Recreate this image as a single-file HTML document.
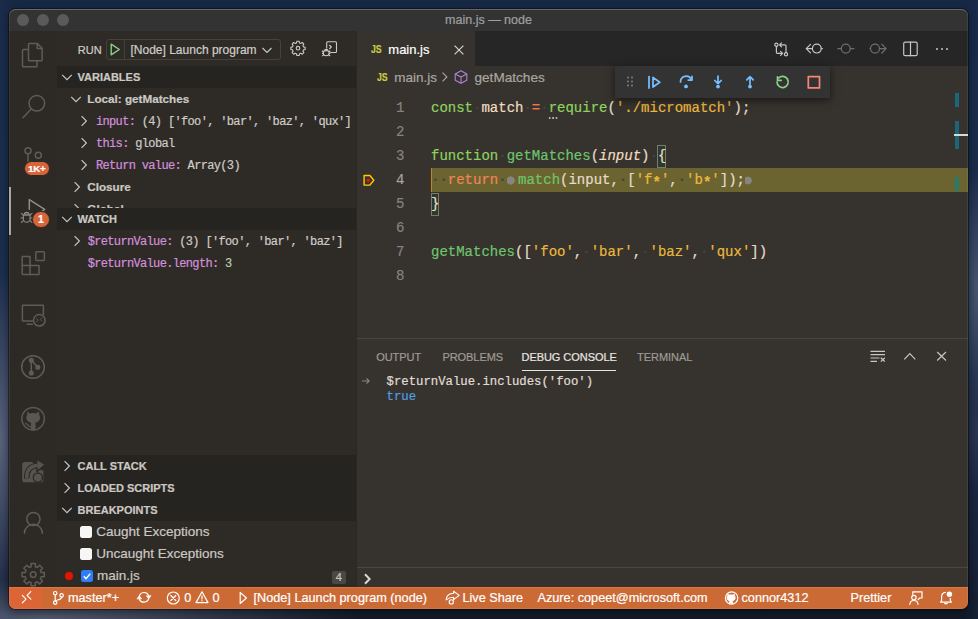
<!DOCTYPE html>
<html><head><meta charset="utf-8">
<style>
*{box-sizing:border-box;margin:0;padding:0}
html,body{width:978px;height:619px;overflow:hidden}
body{position:relative;font-family:"Liberation Sans",sans-serif;
 background:
 radial-gradient(ellipse 36px 170px at 0px 440px,rgba(92,101,126,.95),rgba(92,101,126,0) 100%),
 radial-gradient(ellipse 320px 40px at 40px 619px,rgba(88,96,120,.9),rgba(88,96,120,0) 100%),
 radial-gradient(ellipse 26px 120px at 978px 290px,rgba(80,92,118,.85),rgba(80,92,118,0) 100%),
 radial-gradient(ellipse 20px 60px at 978px 430px,rgba(50,62,90,.6),rgba(50,62,90,0) 100%),
 linear-gradient(90deg,rgba(30,48,80,.55) 0,rgba(30,48,80,0) 12px,rgba(30,48,80,0) 966px,rgba(30,48,80,.3) 978px),linear-gradient(180deg,#172845 0%,#1a2c4a 45%,#1b2741 70%,#121a2a 100%);}
.a{position:absolute}
#win{-webkit-text-stroke:.2px currentColor}
.mono{font-family:"Liberation Mono",monospace}
#win{left:9px;top:9px;width:959px;height:600px;border-radius:6.5px;overflow:hidden;background:#2e2b27;box-shadow:0 0 0 1px rgba(5,8,14,.5),0 3px 8px rgba(0,0,0,.4)}
#title{left:0;top:0;width:959px;height:22px;background:#333333}
.tl{width:12px;height:12px;border-radius:50%;background:#5a5a5a;top:4.5px}
#activity{left:0;top:22px;width:48px;height:556px;background:#2d2a26}
#side{left:48px;top:22px;width:299px;height:556px;background:#2e2b27}
#editor{left:347px;top:22px;width:612px;height:307px;background:#36322d}
#panel{left:347px;top:329px;width:612px;height:249px;background:#36322d;border-top:1px solid #4a463f}
#status{left:0;top:578px;width:959px;height:22px;background:#cc6a36;color:#fff;font-size:12.7px}
.hdr{left:0;width:299px;height:22px;background:#262420;color:#cbc8c3;font-weight:700;font-size:11px}
.grp{height:22px;line-height:22px;font-weight:700;font-size:11.7px;color:#cbc8c3;white-space:nowrap}
.vr{height:22px;line-height:24px;font-size:12px;letter-spacing:-.66px;color:#cfccc7;white-space:nowrap}
.vn{color:#d48fdc}
.cb{width:12px;height:12px;border-radius:2.5px;background:#f6f6f6}
.bp{height:22px;line-height:22.5px;font-size:13.5px;color:#cbc8c3;white-space:nowrap}
.ln{left:0;width:48.5px;text-align:right;height:24px;line-height:24px;font-size:14px;color:#858380}
.code{left:75px;height:24px;line-height:24px;font-size:14px;white-space:pre;color:#e6dccb}
.code i{font-style:normal}
.bpd{display:inline-block;width:11.4px;height:24px;vertical-align:top;background:radial-gradient(circle at 3.6px 12.5px,#87857e 3.8px,rgba(135,133,126,0) 4.4px)}
.w{color:#46433d;font-weight:700}
.k{color:#8fd35f}.v{color:#f2dcc0}.op{color:#e8784a}.f{color:#6fc46f}.p{color:#e6dccb}.st{color:#ebb83e}.r{color:#ee8559}
.ptab{top:11.5px;font-size:11px;color:#9e9b95;white-space:nowrap;letter-spacing:-.05px}
.con{left:30.5px;font-size:12.3px;line-height:15.5px;color:#e0ddd8;white-space:pre}
.sb{top:3.5px;font-size:12.7px;color:#fff;white-space:nowrap}
</style></head><body>
<div id="win" class="a">
 <div id="title" class="a">
  <div class="a tl" style="left:8px"></div>
  <div class="a tl" style="left:28px"></div>
  <div class="a tl" style="left:48px"></div>
  <div class="a" style="left:0;width:959px;top:3.6px;text-align:center;font-size:12.5px;color:#a0a0a0">main.js — node</div>
 </div>
 <div id="activity" class="a">
  <div class="a" style="left:0;top:156px;width:2px;height:48px;background:#a9a6a0"></div>
  <svg class="a" style="left:0;top:0" width="48" height="556" viewBox="9 31 48 556" fill="none" stroke="#5f5b55" stroke-width="1.5" stroke-linejoin="round" stroke-linecap="round">
   <!-- explorer -->
   <path d="M29.3 43.6h8.2l4.6 4.6v11.8q0 .8-.8.8H29.3q-.8 0-.8-.8V44.4q0-.8.8-.8z"/>
   <path d="M37.2 43.8v4.7h4.7"/>
   <path d="M28.3 49.6h-5q-.8 0-.8.8v15.6q0 .8.8.8h12.9q.8 0 .8-.8v-5.2"/>
   <!-- search -->
   <circle cx="36.8" cy="103.3" r="7.8"/>
   <path d="M31.2 109L23 117.8"/>
   <!-- scm -->
   <circle cx="28" cy="150.8" r="3"/>
   <circle cx="38.3" cy="155.2" r="3"/>
   <path d="M28 153.8v8"/>
   <!-- debug -->
   <g stroke="#8f8c87">
   <path d="M29.3 209.3V199.6l15.4 9.8-2.2 1.4"/>
   <g stroke-width="1.1">
   <path d="M24 214.3a2.8 2.6 0 0 1 5.4 0z"/>
   <path d="M23.3 215.3h6.8v3.2a3.4 3.8 0 0 1-6.8 0z"/>
   <path d="M21.4 213.4l1.9 1.6M21 218h2.3M21.4 222.4l2-1.8M32 213.4l-1.9 1.6M32.4 218h-2.3M32 222.4l-2-1.8"/>
   </g></g>
   <!-- extensions -->
   <path d="M22.2 256.5h7.8v9h9v8.5q0 .5-.5.5H22.7q-.5 0-.5-.5v-17q0-.5.5-.5z"/>
   <path d="M22.2 265.5h7.8v9"/>
   <rect x="35.8" y="251.7" width="8.6" height="8.7" rx="1"/>
   <!-- remote explorer -->
   <path d="M32.5 321H23q-.6 0-.6-.6V305.8q0-.6.6-.6h19.8q.6 0 .6.6v8.6"/>
   <circle cx="39.3" cy="320.3" r="5.8"/>
   <path d="M36.6 318.6l1.6 1.6-1.6 1.6M41.9 317.8l-1.6 1.6 1.6 1.6" stroke-width="1"/>
   <path d="M27.2 324.3h5"/>
   <!-- live share circle -->
   <circle cx="33" cy="367" r="11.3"/>
   <circle cx="31.3" cy="360.3" r="1.8" fill="#5f5b55"/>
   <circle cx="37.8" cy="367.3" r="1.8" fill="#5f5b55"/>
   <circle cx="31.3" cy="373" r="1.8" fill="#5f5b55"/>
   <path d="M31.3 360.3v12.7M31.3 360.3l6.5 7"/>
   <!-- github -->
   <circle cx="33.1" cy="418.8" r="11.3" stroke="#5a5752"/>
   <path d="M27.2 411.6l2.6 1.9a9 9 0 0 1 6.4 0l2.6-1.9c.5 1.2.6 2.4.4 3.4.6.8.9 1.6.9 2.6 0 3-2 4.6-4.6 5v7.6h-4.6v-7.6c-2.6-.4-4.6-2-4.6-5 0-1 .3-1.8.9-2.6-.2-1-.1-2.2.4-3.4z" fill="#5a5752" stroke="none"/>
   <path d="M25.6 423.3c1.6.6 2.4 1.6 3.2 2.6.6.7 1.2 1 2 1" stroke="#5a5752" stroke-width="1.3"/>
   <!-- live share share -->
   <rect x="22.2" y="462" width="21.2" height="20.3" rx="2.6" fill="#555350" stroke="none"/>
   <path d="M31 461h14v9.5h-3z" fill="#2d2a26" stroke="none"/>
   <path d="M26.8 478.5C26.3 470.5 30.5 465.6 38 465.2" stroke="#2d2a26" stroke-width="5.6" stroke-linecap="butt"/>
   <path d="M36.6 458.6l9 6.2-8.6 6.6z" fill="#2d2a26" stroke="#2d2a26" stroke-width="1.6"/>
   <path d="M26.8 478.3C26.3 470.5 30.5 465.6 38 465.2" stroke="#555350" stroke-width="3.4" stroke-linecap="butt"/>
   <path d="M37.4 460.2l6.8 4.6-6.6 5.1z" fill="#555350" stroke="none"/>
   <circle cx="37.9" cy="477.6" r="4.6" fill="#555350" stroke="#2d2a26" stroke-width="1.4"/>
   <!-- accounts -->
   <circle cx="33.4" cy="519" r="6.6"/>
   <path d="M24.4 533.3a9 9 0 0 1 18 0"/>
   <!-- gear -->
   <path d="M30.06 567.02 L31.08 566.68 L31.04 563.51 L35.36 563.51 L35.32 566.68 L36.34 567.02 L37.30 567.50 L39.52 565.23 L42.57 568.28 L40.30 570.50 L40.78 571.46 L41.12 572.48 L44.29 572.44 L44.29 576.76 L41.12 576.72 L40.78 577.74 L40.30 578.70 L42.57 580.92 L39.52 583.97 L37.30 581.70 L36.34 582.18 L35.32 582.52 L35.36 585.69 L31.04 585.69 L31.08 582.52 L30.06 582.18 L29.10 581.70 L26.88 583.97 L23.83 580.92 L26.10 578.70 L25.62 577.74 L25.28 576.72 L22.11 576.76 L22.11 572.44 L25.28 572.48 L25.62 571.46 L26.10 570.50 L23.83 568.28 L26.88 565.23 L29.10 567.50Z"/>
   <circle cx="33.2" cy="574.6" r="2.8"/>
  </svg>
  <div class="a" style="left:15px;top:129.7px;width:25.5px;height:15.7px;border-radius:8px;background:#d8643a;border:1px solid #2d2a26;color:#fff;font-size:9.8px;font-weight:700;text-align:center;line-height:13.7px;letter-spacing:-.2px">1K+</div>
  <div class="a" style="left:23.3px;top:179.6px;width:17.4px;height:17.4px;border-radius:50%;background:#d8643a;border:1.2px solid #2d2a26;color:#fff;font-size:10.5px;font-weight:700;text-align:center;line-height:15px">1</div>
 </div>
 <div id="side" class="a"><div class="a" style="left:20.7px;top:12.6px;font-size:11px;color:#cfccc7;letter-spacing:.1px">RUN</div><div class="a" style="left:49px;top:8px;width:175px;height:21px;border:1px solid #45423c;border-radius:3px;background:transparent"></div>
<svg class="a" style="left:53px;top:12px" width="14" height="14" viewBox="0 0 14 14" fill="none" stroke="#89d185" stroke-width="1.4" stroke-linejoin="round"><path d="M1.2 1.2v10.6l8.1-5.3z"/></svg>
<div class="a" style="left:66.5px;top:9px;width:1px;height:19px;background:#43403a"></div>
<div class="a" style="left:73.5px;top:11.5px;font-size:12px;color:#d0cdc8;white-space:nowrap">[Node] Launch program</div><svg class="a" style="left:201.5px;top:10.5px" width="16" height="16" viewBox="0 0 16 16" fill="none" stroke="#c5c5c5" stroke-width="1.2"><path d="M3.5 6l4.5 4.5 4.5-4.5"/></svg><svg class="a" style="left:228px;top:6px" width="56" height="26" viewBox="285 37 56 26" fill="none" stroke="#cdcac5" stroke-width="1.1" stroke-linejoin="round">
  <path d="M296.9 41.2h2.2l.4 1.7 1.3.5 1.5-.9 1.55 1.55-.9 1.5.5 1.3 1.7.4v2.2l-1.7.4-.5 1.3.9 1.5-1.55 1.55-1.5-.9-1.3.5-.4 1.7h-2.2l-.4-1.7-1.3-.5-1.5.9-1.55-1.55.9-1.5-.5-1.3-1.7-.4v-2.2l1.7-.4.5-1.3-.9-1.5 1.55-1.55 1.5.9 1.3-.5z"/>
  <circle cx="298" cy="48.2" r="1.8"/>
  <path d="M326.7 48.5v-5.8c0-.6.4-1 1-1h7.8c.6 0 1 .4 1 1v8.8c0 .6-.4 1-1 1h-5.2"/>
  <path d="M329.3 45l2 2-2 2"/>
  <path d="M324 50.4a2.2 1.6 0 0 1 4.4 0z" fill="#cdcac5" stroke="none"/>
  <path d="M323.4 52c0-1 1.2-1.4 2.8-1.4s2.8.4 2.8 1.4v1.6c0 1.4-1.2 2.2-2.8 2.2s-2.8-.8-2.8-2.2z"/>
  <path d="M322 50.8l1.4 1M322 53.4h1.4M322.2 56l1.4-1M330.4 50.8l-1.4 1M330.4 53.4H329M330.2 56l-1.4-1"/>
  </svg>
<div class="a hdr" style="top:35px"><svg class="a" style="left:2.4000000000000004px;top:3px" width="16" height="16" viewBox="0 0 16 16" fill="none" stroke="#c5c5c5" stroke-width="1.2"><path d="M3.2 5.8L8 10.6l4.8-4.8"/></svg><span class="a" style="left:20.5px;top:0;line-height:22px">VARIABLES</span></div><svg class="a" style="left:11px;top:60px" width="16" height="16" viewBox="0 0 16 16" fill="none" stroke="#c5c5c5" stroke-width="1.2"><path d="M3.2 5.8L8 10.6l4.8-4.8"/></svg><div class="a grp" style="left:30.3px;top:57px">Local: getMatches</div><svg class="a" style="left:18.9px;top:82px" width="16" height="16" viewBox="0 0 16 16" fill="none" stroke="#c5c5c5" stroke-width="1.2"><path d="M5.6 3.2L10.4 8l-4.8 4.8"/></svg><div class="a mono vr" style="left:39px;top:79px"><span class="vn">input:</span> (4) ['foo', 'bar', 'baz', 'qux']</div><svg class="a" style="left:18.9px;top:104px" width="16" height="16" viewBox="0 0 16 16" fill="none" stroke="#c5c5c5" stroke-width="1.2"><path d="M5.6 3.2L10.4 8l-4.8 4.8"/></svg><div class="a mono vr" style="left:39px;top:101px"><span class="vn">this:</span> global</div><svg class="a" style="left:18.9px;top:126px" width="16" height="16" viewBox="0 0 16 16" fill="none" stroke="#c5c5c5" stroke-width="1.2"><path d="M5.6 3.2L10.4 8l-4.8 4.8"/></svg><div class="a mono vr" style="left:39px;top:123px"><span class="vn">Return value:</span> Array(3)</div><svg class="a" style="left:11.7px;top:148px" width="16" height="16" viewBox="0 0 16 16" fill="none" stroke="#c5c5c5" stroke-width="1.2"><path d="M5.6 3.2L10.4 8l-4.8 4.8"/></svg><div class="a grp" style="left:30.3px;top:145px">Closure</div><svg class="a" style="left:11.7px;top:170px" width="16" height="16" viewBox="0 0 16 16" fill="none" stroke="#c5c5c5" stroke-width="1.2"><path d="M5.6 3.2L10.4 8l-4.8 4.8"/></svg><div class="a grp" style="left:30.3px;top:167px">Global</div><div class="a hdr" style="top:177px"><svg class="a" style="left:2.4000000000000004px;top:3px" width="16" height="16" viewBox="0 0 16 16" fill="none" stroke="#c5c5c5" stroke-width="1.2"><path d="M3.2 5.8L8 10.6l4.8-4.8"/></svg><span class="a" style="left:20.5px;top:0;line-height:22px">WATCH</span></div><svg class="a" style="left:12px;top:202px" width="16" height="16" viewBox="0 0 16 16" fill="none" stroke="#c5c5c5" stroke-width="1.2"><path d="M5.6 3.2L10.4 8l-4.8 4.8"/></svg><div class="a mono vr" style="left:30.7px;top:199px"><span class="vn">$returnValue:</span> (3) ['foo', 'bar', 'baz']</div><div class="a mono vr" style="left:30.7px;top:221px"><span class="vn">$returnValue.length:</span> <span style="color:#b5cea8">3</span></div><div class="a hdr" style="top:424px"><svg class="a" style="left:2.4000000000000004px;top:3px" width="16" height="16" viewBox="0 0 16 16" fill="none" stroke="#c5c5c5" stroke-width="1.2"><path d="M5.6 3.2L10.4 8l-4.8 4.8"/></svg><span class="a" style="left:20.5px;top:0;line-height:22px">CALL STACK</span></div><div class="a hdr" style="top:446px"><svg class="a" style="left:2.4000000000000004px;top:3px" width="16" height="16" viewBox="0 0 16 16" fill="none" stroke="#c5c5c5" stroke-width="1.2"><path d="M5.6 3.2L10.4 8l-4.8 4.8"/></svg><span class="a" style="left:20.5px;top:0;line-height:22px">LOADED SCRIPTS</span></div><div class="a hdr" style="top:468px"><svg class="a" style="left:2.4000000000000004px;top:3px" width="16" height="16" viewBox="0 0 16 16" fill="none" stroke="#c5c5c5" stroke-width="1.2"><path d="M3.2 5.8L8 10.6l4.8-4.8"/></svg><span class="a" style="left:20.5px;top:0;line-height:22px">BREAKPOINTS</span></div><div class="a cb" style="left:23px;top:495px"></div><div class="a bp" style="left:39.3px;top:490px">Caught Exceptions</div>
<div class="a cb" style="left:23px;top:517px"></div><div class="a bp" style="left:39.3px;top:512px">Uncaught Exceptions</div>
<div class="a" style="left:7.5px;top:540.5px;width:8.5px;height:8.5px;border-radius:50%;background:#e51400"></div>
<div class="a cb" style="left:24px;top:539px;background:#2f7ef5"><svg class="a" style="left:0;top:0" width="12" height="12" viewBox="0 0 12 12" fill="none" stroke="#fff" stroke-width="1.4"><path d="M2.8 6.3l2.2 2.3 4.3-5"/></svg></div><div class="a bp" style="left:40px;top:534px">main.js</div>
<div class="a" style="left:274.5px;top:539.5px;width:14.5px;height:13px;border-radius:2px;background:#4a4844;color:#c8c5c0;font-size:11px;text-align:center;line-height:13px">4</div></div>
 <div id="editor" class="a">
  <div class="a" style="left:0;top:0;width:612px;height:35px;background:#262626"></div>
  <div class="a" style="left:0;top:0;width:119px;height:35px;background:#36322d"></div>
  <div class="a" style="left:14.7px;top:11.6px;font-size:10.6px;font-weight:700;color:#cbcb41;letter-spacing:-.2px;transform:scaleX(.82);transform-origin:0 0">JS</div>
  <div class="a" style="left:32.3px;top:10.5px;font-size:13px;color:#ffffff">main.js</div>
  <svg class="a" style="left:95px;top:10.5px" width="16" height="16" viewBox="0 0 16 16" fill="none" stroke="#d0d0d0" stroke-width="1.2"><path d="M3.6 3.6l8.8 8.8M12.4 3.6l-8.8 8.8"/></svg>
  <!-- editor actions -->
  <svg class="a" style="left:416px;top:9px" width="180" height="18" viewBox="416 9 180 18" fill="none" stroke="#c5c5c5" stroke-width="1.2" stroke-linecap="round" stroke-linejoin="round">
   <circle cx="420.4" cy="13.7" r="1.6"/>
   <path d="M420.4 15.3v6q0 1 1 1h5.3M424.6 20.3l2 2-2 2"/>
   <circle cx="430" cy="23.3" r="1.6"/>
   <path d="M430 21.7v-6.9q0-1-1-1h-5.4M425.5 11.8l-2 2 2 2"/>
   <path d="M454.5 13.3l-4.3 4.3 4.3 4.3M450.3 17.6h6"/>
   <circle cx="460.8" cy="17.6" r="4.4"/>
   <path d="M465.2 17.6h1.2"/>
   <g stroke="#6f6f6f"><circle cx="489.8" cy="17.6" r="4.5"/><path d="M481.8 17.6h3.5M494.3 17.6h3.7"/>
   <circle cx="519" cy="17.6" r="4.5"/><path d="M514 17.6h.5M523.5 17.6h6.3M525.8 13.2l4.3 4.4-4.3 4.4"/></g>
   <rect x="547.7" y="11.2" width="13.5" height="13.5" rx="1.5"/>
   <path d="M554.5 11.2v13.5"/>
   <g fill="#c5c5c5" stroke="none"><circle cx="581" cy="18" r="1"/><circle cx="586" cy="18" r="1"/><circle cx="591" cy="18" r="1"/></g>
  </svg>
  <!-- breadcrumbs -->
  <div class="a" style="left:20.6px;top:40.3px;font-size:10.6px;font-weight:700;color:#cbcb41;letter-spacing:-.2px;transform:scaleX(.82);transform-origin:0 0">JS</div>
  <div class="a" style="left:38.3px;top:38.7px;font-size:13.5px;color:#a9a6a0">main.js</div>
  <svg class="a" style="left:80.5px;top:38px" width="16" height="16" viewBox="0 0 16 16" fill="none" stroke="#a9a6a0" stroke-width="1.1"><path d="M5.5 3.6L9.9 8l-4.4 4.4"/></svg>
  <svg class="a" style="left:97px;top:38px" width="16" height="16" viewBox="0 0 16 16" fill="none" stroke="#b180d7" stroke-width="1.1" stroke-linejoin="round"><path d="M8 1.8l5.8 3.1v6.3L8 14.3 2.2 11.2V4.9z"/><path d="M2.2 4.9L8 8l5.8-3.1M8 8v6.3"/></svg>
  <div class="a" style="left:118.5px;top:38.7px;font-size:13.6px;color:#a9a6a0">getMatches</div>
  <!-- gutter -->
  <div class="a mono ln" style="top:65px">1</div>
  <div class="a mono ln" style="top:89px">2</div>
  <div class="a mono ln" style="top:113px">3</div>
  <div class="a mono ln" style="top:137px;color:#a8a59f">4</div>
  <div class="a mono ln" style="top:161px">5</div>
  <div class="a mono ln" style="top:185px">6</div>
  <div class="a mono ln" style="top:209px">7</div>
  <div class="a mono ln" style="top:233px">8</div>
  <!-- highlight -->
  <div class="a" style="left:75px;top:137px;width:537px;height:24px;background:#6b6430;border-left:1.5px solid #c0862c"></div>
  <svg class="a" style="left:6.5px;top:143px" width="13" height="13" viewBox="0 0 13 13"><path d="M1.1 1.5h5.8l3.9 4.8-3.9 4.8H1.1z" fill="none" stroke="#ffcc00" stroke-width="1.4" stroke-linejoin="round"/><circle cx="5.3" cy="6.3" r="1.9" fill="#e51400"/></svg>
  <!-- bracket boxes -->
  <div class="a" style="left:301.3px;top:113.5px;width:8.4px;height:23px;border:1px solid #7a7a72;background:#2c3a2c"></div>
  <div class="a" style="left:75px;top:161.5px;width:8.4px;height:23px;border:1px solid #7a7a72;background:#2c3a2c"></div>
  <div class="a mono code" style="top:65px"><span class="k">const</span><i class="w">·</i><span class="v">match</span><i class="w">·</i><span class="op">=</span><i class="w">·</i><span class="k">require</span><span class="p">(</span><span class="st">'./micromatch'</span><span class="p">);</span></div>
  <div class="a" style="left:192px;top:85.5px;width:10px;height:2px;background:radial-gradient(circle,#b0ada8 45%,transparent 50%) 0 0/3.4px 2px repeat-x"></div>
  <div class="a mono code" style="top:113px"><span class="k">function</span><i class="w">·</i><span class="f">getMatches</span><span class="p">(</span><span class="v" style="font-style:italic">input</span><span class="p">)</span><i class="w">·</i><span class="p">{</span></div>
  <div class="a mono code" style="top:137px"><i class="w">··</i><span class="r">return</span><i class="w">·</i><b class="bpd"></b><span class="f">match</span><span class="p">(input,</span><i class="w">·</i><span class="p">[</span><span class="st">'f<span style="position:relative;top:2.5px;font-weight:700">*</span>'</span><span class="p">,</span><i class="w">·</i><span class="st">'b<span style="position:relative;top:2.5px;font-weight:700">*</span>'</span><span class="p">]);</span><b class="bpd" style="width:9px;background:radial-gradient(circle at 2.9px 12.5px,#87857e 3.6px,rgba(135,133,126,0) 4.2px)"></b></div>
  <div class="a mono code" style="top:161px"><span class="p">}</span></div>
  <div class="a mono code" style="top:209px"><span class="f">getMatches</span><span class="p">([</span><span class="st">'foo'</span><span class="p">,</span><i class="w">·</i><span class="st">'bar'</span><span class="p">,</span><i class="w">·</i><span class="st">'baz'</span><span class="p">,</span><i class="w">·</i><span class="st">'qux'</span><span class="p">])</span></div>
  <!-- overview ruler -->
  <div class="a" style="left:598.5px;top:62px;width:4px;height:14px;background:#1b6678"></div>
  <div class="a" style="left:598.5px;top:90px;width:4px;height:28px;background:#1b6678"></div>
  <div class="a" style="left:598.5px;top:146px;width:4px;height:14px;background:#2a7a6a"></div>
  <div class="a" style="left:598px;top:103px;width:14px;height:2px;background:#d8d8d8"></div>
  <!-- debug toolbar -->
  <div class="a" style="left:259px;top:35px;width:215px;height:32px;background:#333333;box-shadow:0 2px 8px rgba(0,0,0,.55)"></div>
  <svg class="a" style="left:259px;top:35px" width="215" height="32" viewBox="615 66 215 32" fill="none" stroke="#75beff" stroke-width="1.75" stroke-linecap="round" stroke-linejoin="round">
   <g fill="#8a8780" stroke="none"><circle cx="628" cy="77.5" r=".9"/><circle cx="632" cy="77.5" r=".9"/><circle cx="628" cy="81.5" r=".9"/><circle cx="632" cy="81.5" r=".9"/><circle cx="628" cy="85.5" r=".9"/><circle cx="632" cy="85.5" r=".9"/></g>
   <path d="M649 76.5v11.5"/><path d="M653 77.5v9.5l6.8-4.75z"/>
   <path d="M680.5 82a5.8 5.8 0 0 1 11-2.5"/><path d="M692 76.3v3.8h-3.8"/><circle cx="686" cy="86.4" r="1.9" fill="#75beff" stroke="none"/>
   <path d="M718 76v7.5M714.8 80.5l3.2 3.2 3.2-3.2"/><circle cx="718" cy="86.6" r="1.9" fill="#75beff" stroke="none"/>
   <path d="M750 84.2v-7.5M746.8 79.8l3.2-3.2 3.2 3.2"/><circle cx="750" cy="86.6" r="1.9" fill="#75beff" stroke="none"/>
   <path d="M777 82a5.6 5.6 0 1 0 1.6-4" stroke="#89d185"/><path d="M777.5 76.8v3.6h3.6" stroke="#89d185"/>
   <rect x="808.3" y="76.7" width="11.2" height="11.2" stroke="#f48771"/>
  </svg>
 </div>
 <div id="panel" class="a">
  <div class="a ptab" style="left:20.2px">OUTPUT</div>
  <div class="a ptab" style="left:86.4px">PROBLEMS</div>
  <div class="a ptab" style="left:165.5px;color:#e7e5e1">DEBUG CONSOLE</div>
  <div class="a ptab" style="left:281.1px">TERMINAL</div>
  <div class="a" style="left:165.5px;top:30.8px;width:94.8px;height:1px;background:#e7e5e1"></div>
  <svg class="a" style="left:510px;top:7px" width="90" height="20" viewBox="866 346 90 20" fill="none" stroke="#c5c5c5" stroke-width="1.2" stroke-linecap="butt">
   <path d="M870.5 351.3h14.5M870.5 354.7h14.5M870.5 358h9M870.5 361.3h6.5"/>
   <path d="M880.8 357.8l4 3.8M884.8 357.8l-4 3.8" stroke-width="1.3"/>
   <path d="M904.3 359.3l5.5-5.8 5.5 5.8"/>
   <path d="M937.2 352l8.8 8.5M946 352l-8.8 8.5"/>
  </svg>
  <svg class="a" style="left:5px;top:37px" width="10" height="10" viewBox="0 0 10 10" fill="none" stroke="#8a8780" stroke-width="1.1"><path d="M1 5h7.2M5.5 2.3L8.2 5 5.5 7.7"/></svg>
  <div class="a mono con" style="top:35.5px">$returnValue.includes('foo')</div>
  <div class="a mono con" style="top:51.3px;color:#4f9fe0">true</div>
  <div class="a" style="left:0;top:228.3px;width:612px;height:1px;background:#4a4740"></div>
  <svg class="a" style="left:6px;top:232.5px" width="12" height="14" viewBox="0 0 12 14" fill="none" stroke="#d8d8d8" stroke-width="2" stroke-linejoin="miter"><path d="M3 2.3l4.6 4.7L3 11.7"/></svg>
 </div>
 <div class="a" style="left:346.5px;top:22px;width:1.5px;height:556px;background:#2b2824"></div>
 <div id="status" class="a">
  <div class="a" style="left:0;top:0;width:34px;height:22px;background:#dc6535"></div>
  <div class="a" style="left:0;top:0;width:959px;height:1px;background:rgba(255,140,80,.35)"></div>
  <svg class="a" style="left:0;top:0" width="959" height="22" viewBox="9 587 959 22" fill="none" stroke="#fff" stroke-width="1.2" stroke-linecap="round" stroke-linejoin="round">
   <path d="M22.3 595.3l3.7 3.8-3.7 3.8M30.8 591.6l-3.7 3.8 3.7 3.8"/>
   <circle cx="55.2" cy="593.2" r="1.7"/><circle cx="61.6" cy="595.4" r="1.7"/><circle cx="55.2" cy="602.6" r="1.7"/>
   <path d="M55.2 594.9v5.9M61.6 597.1c0 2.5-2 2.6-4 2.9-1.2.2-2.4.7-2.4 1.2"/>
   <path d="M139.3 596.3a4.9 4.9 0 0 1 9.3-.8M148.7 598.4a4.9 4.9 0 0 1-9.3.8"/>
   <path d="M146.6 596.2l2.2 2.4 2-2.6z" fill="#fff" stroke-width=".8"/>
   <path d="M141.4 598.4l-2.2-2.4-2 2.6z" fill="#fff" stroke-width=".8"/>
   <circle cx="173.3" cy="598" r="6"/><path d="M170.8 595.5l5 5M175.8 595.5l-5 5"/>
   <path d="M202 591.8l6 10.8h-12z"/><path d="M202 595.8v3.3M202 600.6v.4"/>
   <path d="M240.2 592.5v11l6.2-5.5z"/>
   <path d="M446.2 599.8C446.4 596 449.4 593.5 453.6 593.3V591.2l5.6 4.2-5.6 4.2v-2.3c-3.2 0-5.6 1-7.4 2.5z" stroke-width="1.1"/>
   <circle cx="451.3" cy="601.9" r="2.1" stroke-width="1.1"/>
   <circle cx="731.6" cy="598" r="6.2"/>
   <path d="M729.5 603.8v-1.8c0-.6.2-1 .5-1.3-1.8-.2-3-.9-3-3 0-.6.2-1.2.6-1.6-.1-.3-.2-.9.1-1.7 0 0 .6-.2 1.8.6a6 6 0 0 1 3.2 0c1.2-.8 1.8-.6 1.8-.6.3.8.2 1.4.1 1.7.4.4.6 1 .6 1.6 0 2.1-1.3 2.8-3 3 .3.3.5.8.5 1.4v1.7" fill="#fff" stroke-width=".8"/>
   <path d="M912.8 594.3v-2.5h9.2v6.2h-2.3l-1.6 1.7"/>
   <circle cx="913.9" cy="597.6" r="2.2"/><path d="M909.8 604.3c.3-2.6 1.9-3.8 4.1-3.8s3.8 1.2 4.1 3.8"/>
   <path d="M945.6 592.4c-2.3.2-4 2.1-4 4.5v3.6l-1.1 1.6h10.9l-1.1-1.6v-3"/><path d="M944.6 603.6h2.6"/>
   <circle cx="949.4" cy="594.2" r="3.9" fill="#cc6a36" stroke="none"/>
   <circle cx="949.4" cy="594.2" r="2.7" fill="#fff" stroke="none"/>
  </svg>
  <div class="a sb" style="left:59px">master*+</div>
  <div class="a sb" style="left:175.3px">0</div>
  <div class="a sb" style="left:203.6px">0</div>
  <div class="a sb" style="left:244.5px">[Node] Launch program (node)</div>
  <div class="a sb" style="left:453.5px">Live Share</div>
  <div class="a sb" style="left:528.5px">Azure: copeet@microsoft.com</div>
  <div class="a sb" style="left:732.5px">connor4312</div>
  <div class="a sb" style="left:841.5px">Prettier</div>
 </div>
</div>
<div class="a" style="left:9px;top:9px;width:959px;height:600px;border-radius:6.5px;box-shadow:inset 0 1px 0 rgba(255,255,255,.2),inset 0 0 0 1px rgba(255,255,255,.07);pointer-events:none"></div>
</body></html>
